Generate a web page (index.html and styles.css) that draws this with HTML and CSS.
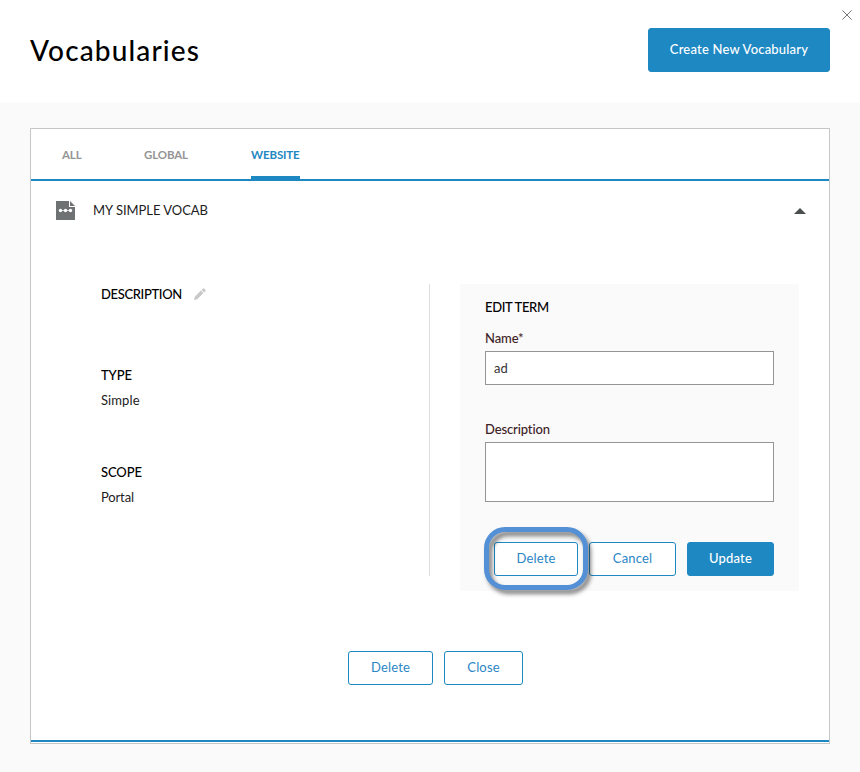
FILE: index.html
```html
<!DOCTYPE html>
<html lang="en">
<head>
<meta charset="utf-8">
<title>Vocabularies</title>
<link rel="stylesheet" href="styles.css">
</head>
<body>
<header class="header">
  <h1 class="title">Vocabularies</h1>
  <button class="btn btn-primary btn-create">Create New Vocabulary</button>
  <svg class="dismiss" width="10" height="10" viewBox="0 0 10 10"><path d="M.4.4l9.2 9.2M9.6.4L.4 9.6" stroke="#777" stroke-width="1" fill="none"/></svg>
</header>
<main class="panel">
  <nav class="tabs">
    <a class="tab tab-all">ALL</a>
    <a class="tab tab-global">GLOBAL</a>
    <a class="tab tab-active">WEBSITE</a>
  </nav>
  <div class="row">
    <svg width="19" height="19" viewBox="0 0 19 19"><path d="M0 0h13v6h6v13H0z" fill="#6f7273"/><path d="M14 0l5 5h-5z" fill="#6f7273"/><path d="M4.5 9.5h10" stroke="#fff" stroke-width=".7"/><circle cx="4.5" cy="9.5" r="1.7" fill="#fff"/><circle cx="9.5" cy="9.5" r="1.7" fill="#fff"/><circle cx="14.5" cy="9.5" r="1.7" fill="#fff"/></svg>
    <span class="row-name">MY SIMPLE VOCAB</span>
    <svg class="caret" width="12" height="6" viewBox="0 0 12 6"><path d="M6 0l6 6H0z" fill="#4b4e4f"/></svg>
  </div>
  <div class="details">
    <section class="info">
      <div class="item item-description">
        <h2 class="label">DESCRIPTION</h2>
        <svg width="12" height="12" viewBox="0 0 12 12"><path d="M0 12l.8-3.3L6.9 2.6l2.5 2.5-6.1 6.1zM7.6 1.9L9 .5q.5-.5 1 0L11.5 2q.5.5 0 1l-1.4 1.4z" fill="#c8c8c8"/></svg>
      </div>
      <div class="item">
        <h2 class="label label-short">TYPE</h2>
        <p class="value">Simple</p>
      </div>
      <div class="item">
        <h2 class="label label-short">SCOPE</h2>
        <p class="value value-scope">Portal</p>
      </div>
    </section>
    <form class="term">
      <h2 class="label">EDIT TERM</h2>
      <label class="field-label" for="name">Name*</label>
      <div class="field" id="name">ad</div>
      <label class="field-label field-label-second" for="description">Description</label>
      <div class="field field-tall" id="description"></div>
      <div class="actions">
        <button type="button" class="btn btn-delete">Delete<span class="highlight"></span></button>
        <button type="button" class="btn btn-cancel">Cancel</button>
        <button type="button" class="btn btn-primary btn-update">Update</button>
      </div>
    </form>
  </div>
  <div class="footer">
    <button class="btn btn-remove">Delete</button>
    <button class="btn btn-close">Close</button>
  </div>
</main>
</body>
</html>
```
FILE: styles.css
```css
* { box-sizing: border-box; }
body {
  margin: 0;
  min-height: 772px;
  background: #fafafa;
  color: #000;
  font: 13px/20px Lato, "Liberation Sans", sans-serif;
}
h1, h2, p { margin: 0; }
.header {
  position: relative;
  height: 103px;
  padding: 28px 30px 0;
  display: flex;
  justify-content: space-between;
  align-items: flex-start;
  background: #fff;
}
.title { font-size: 28px; font-weight: 500; line-height: 44px; letter-spacing: 1.13px; }
.dismiss { position: absolute; left: 842px; top: 10px; }
.btn {
  display: flex;
  justify-content: center;
  align-items: center;
  height: 34px;
  padding: 0 0 3px;
  border: 1px solid #1e88c3;
  border-radius: 3px;
  background: #fff;
  color: #2b86c5;
  font: 400 13px/20px Lato, "Liberation Sans", sans-serif;
  letter-spacing: .15px;
  white-space: nowrap;
}
.btn-primary { background: #1e88c3; color: #fff; font-weight: 500; }
.btn-create { width: 182px; height: 44px; letter-spacing: .19px; }
.panel {
  width: 800px;
  height: 616px;
  margin: 25px 30px 0;
  border: 1px solid #c6c6c6;
  background: #fff;
}
.tabs {
  display: flex;
  height: 52px;
  padding-left: 31px;
  border-bottom: 2px solid #1e88c3;
}
.tab { height: 50px; padding-top: 16px; color: #959595; font-size: 11.5px; font-weight: 700; letter-spacing: -.13px; white-space: nowrap; }
.tab-all { width: 82px; }
.tab-global { width: 107px; }
.tab-active { width: 49px; color: #1e88c3; border-bottom: 3px solid #1e88c3; }
.row { display: flex; align-items: center; height: 58px; padding: 0 23px 0 25px; }
.row-name { margin-left: 18px; color: #1c1c1c; letter-spacing: -.03px; }
.caret { margin: 2px 0 0 auto; }
.details { display: flex; height: 352px; padding: 45px 30px 0; }
.info { width: 369px; height: 292px; padding-left: 40px; border-right: 1px solid #ddd; }
.item { height: 97px; }
.item-description { display: flex; height: 81px; gap: 12px; }
.item-description svg { margin-top: 4px; }
.label { font-size: 13px; font-weight: 500; line-height: 20px; letter-spacing: -.35px; white-space: nowrap; }
.label-short { letter-spacing: -.1px; }
.value { margin-top: 5px; color: #1c1c1c; letter-spacing: .1px; }
.value-scope { letter-spacing: -.15px; }
.term { width: 339px; height: 307px; margin-left: 30px; padding: 13px 25px 0; background: #fafafa; }
.field-label { display: block; margin-top: 11px; line-height: 20px; color: #3d2226; font-weight: 500; letter-spacing: -.12px; }
.field-label-second { margin-top: 34px; }
.field { height: 34px; margin-top: 3px; padding: 6px 8px; border: 1px solid #959595; background: #fff; color: #333; }
.field-tall { height: 60px; }
.actions { display: flex; margin-top: 40px; padding-left: 9px; }
.btn-delete { position: relative; width: 84px; }
.btn-cancel { width: 87px; margin-left: 11px; }
.btn-update { width: 87px; margin-left: 11px; }
.highlight {
  position: absolute;
  z-index: 1;
  left: -11px;
  top: -16px;
  width: 104px;
  height: 63px;
  border: 5px solid #5390d6;
  border-radius: 21px;
  filter: drop-shadow(3px 4px 2px rgba(0, 0, 0, .5));
}
.footer { display: flex; gap: 11px; height: 151px; padding: 60px 0 0 317px; border-bottom: 2px solid #1e88c3; }
.btn-remove { width: 85px; }
.btn-close { width: 79px; }
```
